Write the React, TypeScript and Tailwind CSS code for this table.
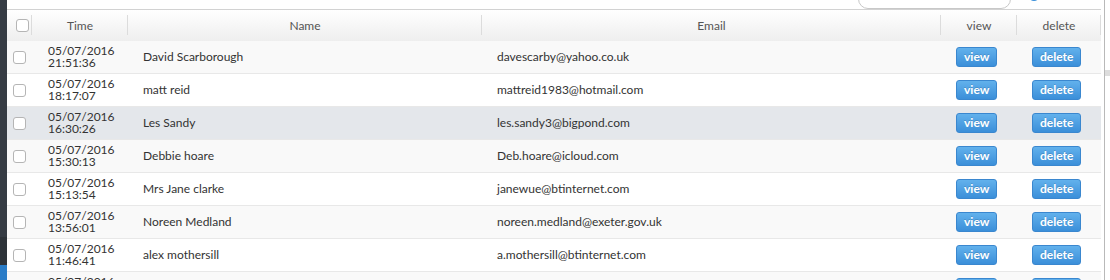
import React from "react";

const rows = [
  { d: "05/07/2016", t: "21:51:36", name: "David Scarborough", email: "davescarby@yahoo.co.uk", bg: "bg-[#f9f9f9]" },
  { d: "05/07/2016", t: "18:17:07", name: "matt reid", email: "mattreid1983@hotmail.com", bg: "bg-white" },
  { d: "05/07/2016", t: "16:30:26", name: "Les Sandy", email: "les.sandy3@bigpond.com", bg: "bg-[#e4e7eb]" },
  { d: "05/07/2016", t: "15:30:13", name: "Debbie hoare", email: "Deb.hoare@icloud.com", bg: "bg-[#f9f9f9]" },
  { d: "05/07/2016", t: "15:13:54", name: "Mrs Jane clarke", email: "janewue@btinternet.com", bg: "bg-white" },
  { d: "05/07/2016", t: "13:56:01", name: "Noreen Medland", email: "noreen.medland@exeter.gov.uk", bg: "bg-[#f9f9f9]" },
  { d: "05/07/2016", t: "11:46:41", name: "alex mothersill", email: "a.mothersill@btinternet.com", bg: "bg-white" },
  { d: "05/07/2016", t: "10:12:30", name: "", email: "", bg: "bg-[#f9f9f9]" },
];

const grid = "grid grid-cols-[25px_96px_354px_459px_76px_84px]";

function Check() {
  return <div className="w-[13px] h-[13px] rounded-[3px] border border-[#b5b5b5] bg-white ml-[6px]" />;
}

function Btn({ label }: { label: string }) {
  return (
    <div className="h-[20px] px-[7px] flex items-center rounded-[3px] border border-[#3a87cf] bg-gradient-to-b from-[#62b1ec] to-[#3b8fd9] text-white font-bold text-[12px] leading-none [text-shadow:0_-1px_0_rgba(0,0,0,0.15)]">
      {label}
    </div>
  );
}

function HeadCell({ children }: { children?: React.ReactNode }) {
  return (
    <div className="relative flex items-center justify-center text-[12px] text-[#555]">
      {children}
      <div className="absolute right-0 top-[5px] bottom-[6px] w-px bg-[#dcdcdc]" />
    </div>
  );
}

export default function App() {
  return (
    <div className="w-[1110px] h-[280px] overflow-hidden flex bg-white" style={{ fontFamily: "Lato, 'Open Sans', sans-serif" }}>
      <div className="w-[7px] flex flex-col shrink-0">
        <div className="h-[237px] shrink-0 bg-[#363c44]" />
        <div className="h-[28px] shrink-0 bg-[#2e3339]" />
        <div className="flex-1 bg-[#2a7cc7]" />
      </div>
      <div className="w-[1094px] flex flex-col shrink-0">
        <div className="h-[9px] shrink-0 overflow-hidden flex items-end bg-white">
          <div className="ml-[851px] w-[153px] h-[30px] rounded-[10px] border border-[#c8c8c8] bg-white shrink-0" />
          <div className="ml-[17px] w-[12px] h-[12px] rounded-full bg-[#3a8fd9] mb-[8px] shrink-0" />
        </div>
        <div className={`${grid} h-[32px] shrink-0 border-t border-[#d2d2d2] bg-gradient-to-b from-white to-[#eeeeee]`}>
          <HeadCell>
            <Check />
          </HeadCell>
          <HeadCell>Time</HeadCell>
          <HeadCell>Name</HeadCell>
          <HeadCell>Email</HeadCell>
          <HeadCell>view</HeadCell>
          <HeadCell>delete</HeadCell>
        </div>
        {rows.map((r, i) => (
          <div key={i} className={`${grid} h-[33px] shrink-0 border-b border-[#e8e8e8] text-[12px] text-[#333] ${r.bg}`}>
            <div className="flex items-center">
              <Check />
            </div>
            <div className="flex flex-col justify-center pl-[16px] leading-[12px]">
              <span>{r.d}</span>
              <span>{r.t}</span>
            </div>
            <div className="flex items-center pl-[15px]">{r.name}</div>
            <div className="flex items-center pl-[15px]">{r.email}</div>
            <div className="flex items-center pl-[15px]">
              <Btn label="view" />
            </div>
            <div className="flex items-center pl-[15px]">
              <Btn label="delete" />
            </div>
          </div>
        ))}
      </div>
      <div className="flex-1 flex">
        <div className="w-[3px]" />
        <div className="w-px bg-[#b9b9b9]" />
        <div className="flex-1 flex flex-col">
          <div className="h-[70px] shrink-0" />
          <div className="h-[6px] shrink-0 bg-[#dddddd]" />
        </div>
      </div>
    </div>
  );
}
